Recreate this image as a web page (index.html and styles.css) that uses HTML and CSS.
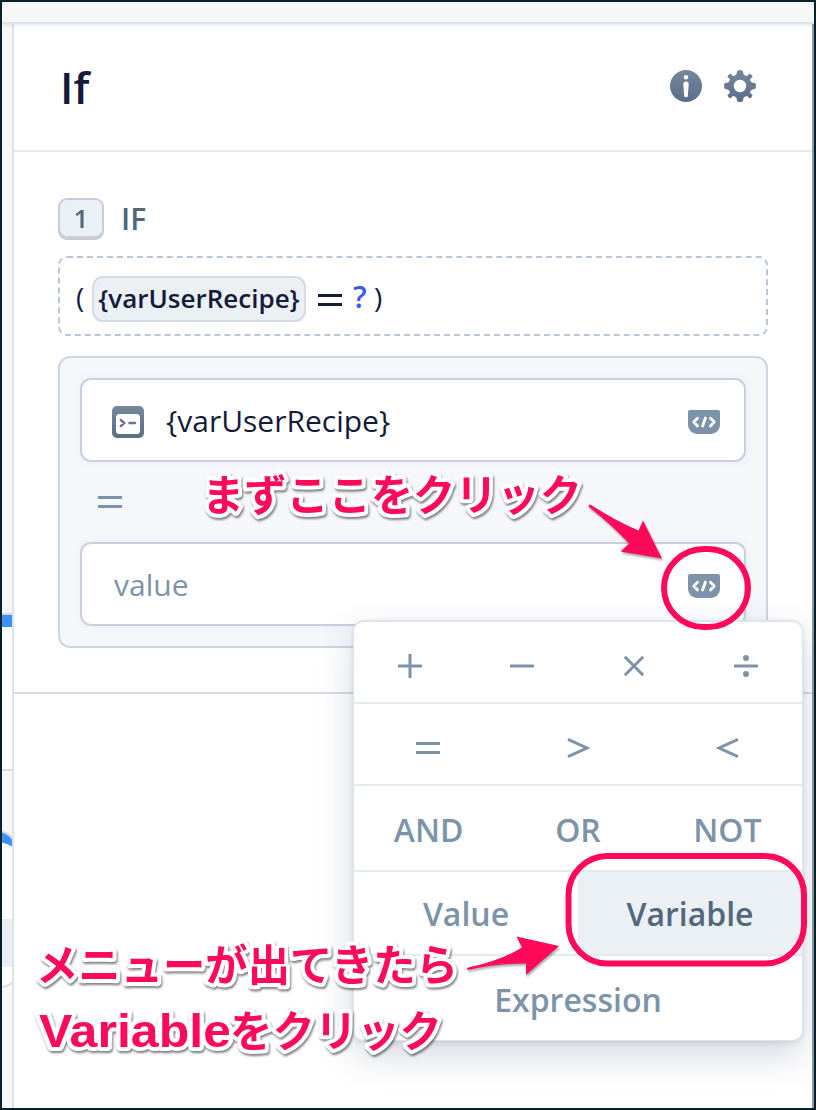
FILE: index.html
```html
<!DOCTYPE html>
<html lang="ja">
<head>
<meta charset="utf-8">
<title>If</title>
<link rel="stylesheet" href="styles.css">
</head>
<body>
<svg class="defs" width="0" height="0">
  <defs>
    <linearGradient id="slate" x1="0" y1="0" x2="0" y2="1"><stop offset="0" stop-color="#76879d"/><stop offset="1" stop-color="#5b6e89"/></linearGradient>
    <symbol id="code" viewBox="0 0 32 24">
      <path d="M2 0h28a2 2 0 0 1 2 2v13a9 9 0 0 1-9 9H9A9 9 0 0 1 0 15V2a2 2 0 0 1 2-2z" fill="#7d93a9"/>
      <path d="M9.500 8.200 5.800 12l3.700 4M22.500 8.200l3.700 3.800-3.700 4M17.400 8l-2.800 8" fill="none" stroke="#fff" stroke-width="2.800" stroke-linecap="round" stroke-linejoin="round"/>
    </symbol>
  </defs>
</svg>
<div class="window">
  <div class="topbar"></div>
  <div class="main">
    <div class="canvas">
      <svg width="10" height="1084" viewBox="2 24 10 1084">
        <path d="M2 614h10v157H2z" fill="#fff"/>
        <path d="M2 613h10v2H2z" fill="#d6d9dc"/>
        <path d="M2 615h10v12H2z" fill="#3a92ff"/>
        <path d="M2 769h10v2H2z" fill="#d9dde2"/>
        <path d="M2 831q6 2 10 6v146q-4 3-10 4z" fill="#fff"/>
        <path d="M2 831.500q6 2 10 6.500" fill="none" stroke="#d2d4d8" stroke-width="2"/>
        <path d="M2 832.500q6 2 10 7v7q-5-3-10-4z" fill="#3a92ff"/>
        <path d="M2 919h10v48H2z" fill="#eaeff3"/>
        <path d="M2 987q7-1 10-5" fill="none" stroke="#d9dde2" stroke-width="2"/>
      </svg>
    </div>
    <div class="panel">
      <header class="header">
        <h1 class="title">If</h1>
        <div class="actions">
          <svg width="32" height="32" viewBox="0 0 32 32"><circle cx="16" cy="16" r="16" fill="url(#slate)"/><circle cx="16" cy="7.200" r="2.200" fill="#fff"/><path d="M13.300 14a2.700 2.500 0 0 1 5.400 0L17.800 26q-.1 1.200-1.800 1.200t-1.800-1.200z" fill="#fff"/></svg>
          <svg width="32" height="32" viewBox="0 0 32 32"><path fill="url(#slate)" fill-rule="evenodd" d="M13 1.500Q13.200 0 16 0t3 1.500l.5 2.500q.3 1 1.800 1.600t2.500 0l1.200-1.700q1-.5 2.400.900t1 2.500L26.600 8.500q-.8.900-.1 2.300t1.800 1.800l2.500.4Q32 13.300 32 16t-1.200 3l-2.500.4q-1.100.3-1.800 1.800t.1 2.300l1.800 1.200q.4 1-1 2.500t-2.400.9l-1.200-1.700q-1-.6-2.500 0T19.500 28L19 30.500Q18.800 32 16 32t-3-1.500l-.5-2.500q-.3-1-1.800-1.600t-2.500 0l-1.200 1.700q-1 .5-2.400-.9t-1-2.500l1.800-1.200q.8-.9.100-2.300T3.700 19.400L1.200 19Q0 18.700 0 16t1.200-3l2.500-.4q1.100-.3 1.800-1.800t-.1-2.300L3.600 7.300q-.4-1 1-2.500t2.400-.9l1.200 1.700q1 .6 2.500 0T12.500 4zM16 9.800a6.200 6.200 0 1 0 0 12.400 6.200 6.200 0 0 0 0-12.400z"/></svg>
        </div>
      </header>
      <section class="body">
        <div class="step"><span class="num">1</span><span class="kind">IF</span></div>
        <div class="formula">
          <span class="paren">(</span><span class="chip">{varUserRecipe}</span>
          <svg class="eq" width="24" height="14" viewBox="0 0 24 14"><path d="M0 2.500h24M0 11.500h24" stroke="#141a3a" stroke-width="3"/></svg>
          <span class="unknown">?</span><span class="paren">)</span>
        </div>
        <div class="group">
          <div class="field">
            <svg width="32" height="32" viewBox="0 0 32 32"><rect width="32" height="32" rx="5" fill="url(#slate)"/><rect x="4" y="8" width="24" height="20" rx="3.500" fill="#fff"/><path d="M8.800 14l3.400 3-3.400 3.200M17.500 17h5.500" fill="none" stroke="#66788f" stroke-width="2.500" stroke-linecap="round"/></svg>
            <span class="value">{varUserRecipe}</span>
            <svg class="code" width="32" height="24"><use href="#code"/></svg>
          </div>
          <div class="operator"><svg width="24" height="12" viewBox="0 0 24 12"><path d="M0 1.500h24M0 10.500h24" stroke="#7d93a9" stroke-width="3"/></svg></div>
          <div class="field">
            <span class="placeholder">value</span>
            <svg class="code" width="32" height="24"><use href="#code"/></svg>
          </div>
        </div>
      </section>
    </div>
  </div>
</div>

<div class="menu">
  <div class="row">
    <div class="cell"><svg width="24" height="24" viewBox="0 0 24 24"><path d="M12 0v24M0 12h24"/></svg></div>
    <div class="cell"><svg width="24" height="24" viewBox="0 0 24 24"><path d="M0 12h24"/></svg></div>
    <div class="cell"><svg width="24" height="24" viewBox="0 0 24 24"><path d="M2.800 2.800l18.400 18.400M21.200 2.800 2.800 21.200"/></svg></div>
    <div class="cell"><svg width="24" height="24" viewBox="0 0 24 24"><path d="M0 12h24"/><circle cx="12" cy="4" r="3"/><circle cx="12" cy="20" r="3"/></svg></div>
  </div>
  <div class="row compare">
    <div class="cell"><svg width="24" height="24" viewBox="0 0 24 24"><path d="M0 7.500h24M0 16.500h24"/></svg></div>
    <div class="cell"><svg width="24" height="24" viewBox="0 0 24 24"><path d="M2 3.300 21 12 2 20.700"/></svg></div>
    <div class="cell"><svg width="24" height="24" viewBox="0 0 24 24"><path d="M22 3.300 3 12l19 8.700"/></svg></div>
  </div>
  <div class="row logic"><div class="cell">AND</div><div class="cell">OR</div><div class="cell">NOT</div></div>
  <div class="row types"><div class="cell">Value</div><div class="cell active">Variable</div></div>
  <div class="row last"><div class="cell">Expression</div></div>
</div>

<svg class="notes" width="816" height="1110" viewBox="0 0 816 1110">
  <g fill="none" stroke="#ff0a5a" stroke-width="6">
    <rect x="664" y="549" width="84" height="78" rx="40" ry="39"/>
    <rect x="568.500" y="856" width="235.500" height="107.500" rx="39"/>
  </g>
  <g class="arrows" fill="#ff0a5a">
    <path d="M590 504.500Q588 505 589 507 612 525 629 543.500L620.500 551.500 662 558.500 643 520.500 638.500 530.500Q618 522 590 504.500z"/>
    <path d="M468 967.500Q466 969 468 970 496 963.500 526 963.500L526 975 559 946 516.500 936.500 522 947.500Q500 961 468 967.500z"/>
  </g>
  <g class="callouts">
    <text x="202" y="511" textLength="380" lengthAdjust="spacingAndGlyphs">まずここをクリック</text>
    <text x="36" y="981" textLength="422" lengthAdjust="spacingAndGlyphs">メニューが出てきたら</text>
    <text class="latin" x="39" y="1047" textLength="192" lengthAdjust="spacingAndGlyphs">Variable</text>
    <text x="230" y="1047" textLength="212" lengthAdjust="spacingAndGlyphs">をクリック</text>
  </g>
</svg>
</body>
</html>
```
FILE: styles.css
```css
* { box-sizing: border-box; }
body { margin: 0; background: #fff; font-family: "Open Sans", "Noto Sans", "Noto Sans CJK JP", sans-serif; }
svg { display: block; flex: none; }
.defs { position: absolute; }
.window { width: 816px; height: 1110px; border: 2px solid #02212b; display: flex; flex-direction: column; overflow: hidden; }
.topbar { height: 22px; flex: none; background: #f7f7f7; border-bottom: 2px solid #dfe2ec; box-shadow: 0 1px 4px rgba(60,70,100,.14); z-index: 1; }
.main { flex: 1; display: flex; }
.canvas { width: 12px; background: #f7f7f7; border-right: 2px solid #dce4e9; }
.panel { flex: 1; background: #fff; border-right: 2px solid #92999a; }
.header { height: 128px; border-bottom: 2px solid #e5eaef; padding: 0 56px 0 46px; display: flex; align-items: center; justify-content: space-between; }
.title { margin: 0; font-size: 44px; line-height: 60px; font-weight: 600; color: #141a3a; }
.actions { display: flex; gap: 22px; margin-top: -2px; }
.body { height: 542px; padding: 46px 44px 0; border-bottom: 2px solid #d7dbe8; }
.step { display: flex; align-items: center; gap: 17px; height: 42px; font-size: 30px; line-height: 40px; font-weight: 600; color: #52677e; }
.num { width: 46px; height: 40px; margin-bottom: 2px; border: 2px solid #c8cee0; border-radius: 9px; background: #eaf0f4; box-shadow: 0 2px 0 #c9c9ca; text-align: center; font-size: 26px; line-height: 36px; }
.formula { height: 80px; margin-top: 16px; border: 2px dashed #b8c7d9; border-radius: 9px; display: flex; align-items: center; padding: 0 14px 0 16px; color: #141a3a; }
.paren { font-size: 28px; line-height: 38px; width: 10px; margin-top: 1px; }
.chip { height: 46px; width: 214px; margin: 5px 0 0 6px; border: 2px solid #d6dae8; border-radius: 11px; background: #eaf0f4; font-size: 26px; line-height: 41px; font-weight: 600; display: flex; justify-content: center; white-space: nowrap; }
.eq { margin: 7px 11px 0 12px; }
.unknown { color: #3c55f5; font-size: 30px; line-height: 40px; font-weight: 600; width: 16px; margin: 1px 5px 0 0; }
.group { height: 292px; margin-top: 20px; border: 2px solid #cbd7e3; border-radius: 12px; background: #f5f7fb; padding: 20px; }
.field { height: 84px; border: 2px solid #c8d0df; border-radius: 11px; background: #fff; box-shadow: 0 0 10px rgba(60,80,120,.06); display: flex; align-items: center; padding: 0 24px 0 30px; font-size: 30px; line-height: 40px; }
.field .code { margin-left: auto; margin-top: 4px; }
.value { margin: 2px 0 0 22px; color: #141a3a; }
.field > svg:first-child { margin-top: 4px; }
.placeholder { margin: 2px 0 0 2px; color: #7d93a9; }
.operator { height: 80px; padding: 34px 16px 0 18px; }
.menu { position: absolute; left: 353px; top: 620px; width: 450px; height: 421px; background: #fff; border: 1px solid #dfe5ec; border-top-width: 2px; border-radius: 11px; box-shadow: 0 14px 36px rgba(40,55,95,.2), 0 2px 5px rgba(60,80,120,.13); font-size: 32px; line-height: 42px; font-weight: 600; color: #7d93a9; }
.row { display: flex; height: 82px; border-bottom: 2px solid #e5eaef; }
.row svg { fill: none; stroke: #7d93a9; stroke-width: 3; margin-top: 8px; }
.row circle { fill: #7d93a9; stroke: none; }
.cell { flex: 1; display: flex; align-items: center; justify-content: center; }
.compare .cell:first-child { padding-right: 2px; }
.compare .cell:last-child { padding-left: 2px; }
.row.logic { height: 86px; padding-top: 4px; }
.row.types { height: 84px; }
.types .cell { padding-top: 2px; }
.row.last { height: 84px; border: 0; padding-top: 4px; }
.cell.active { background: #eaf0f4; color: #52677e; }
.notes { position: absolute; left: 0; top: 0; pointer-events: none; }
.arrows { filter: drop-shadow(1px 2px 1px rgba(0,0,0,.35)); }
.callouts { font-family: "Noto Sans CJK JP", sans-serif; font-size: 43px; font-weight: 700; fill: #ff0a5a; stroke: #fff; stroke-width: 8px; stroke-linejoin: round; paint-order: stroke fill; filter: drop-shadow(1px 2px 1px rgba(0,0,0,.5)); }
.callouts .latin { font-family: "Liberation Sans", Arial, sans-serif; font-size: 47px; }
```
